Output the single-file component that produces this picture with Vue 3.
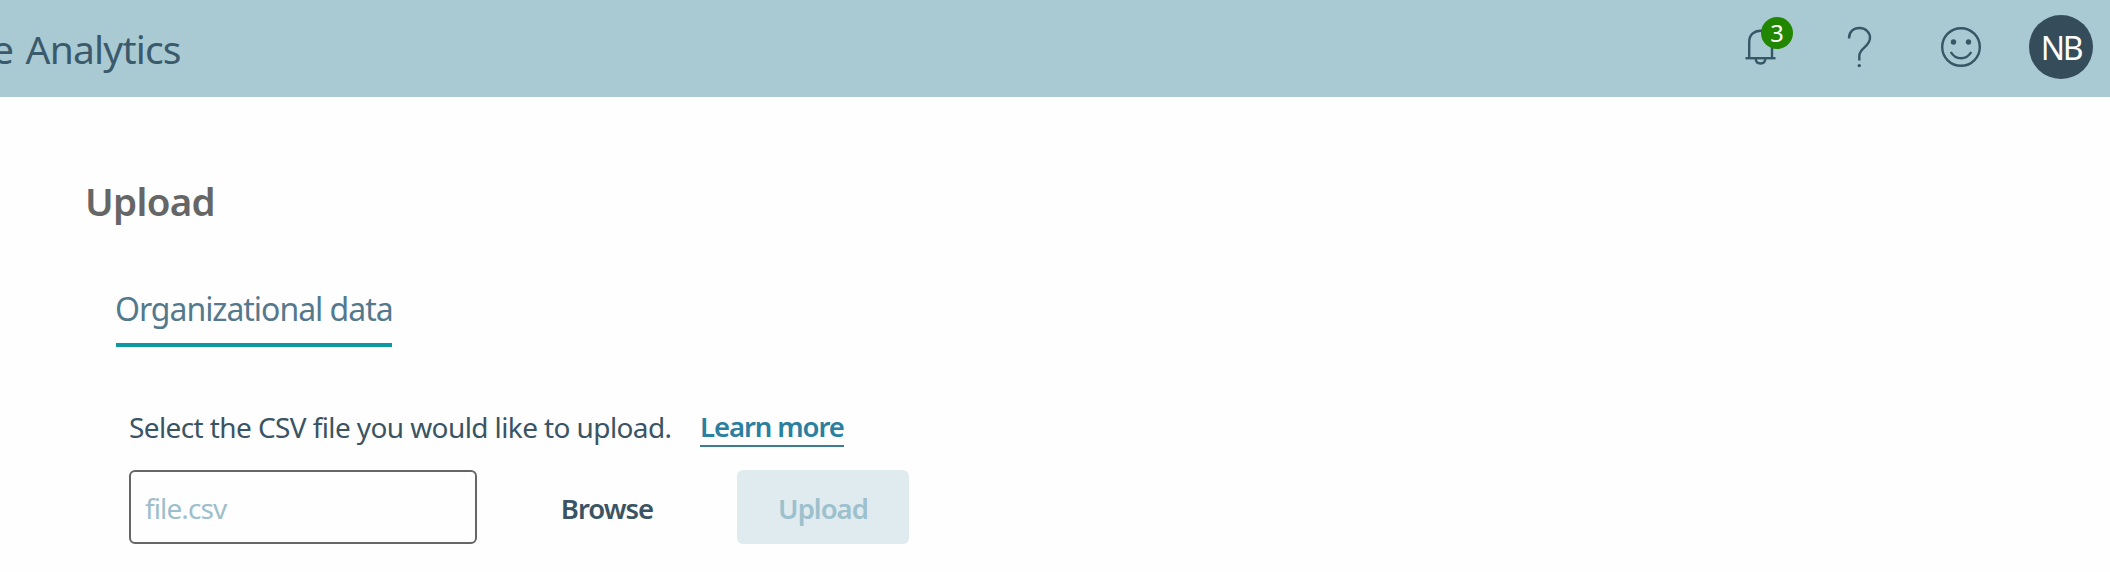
<script setup>
import { ref } from 'vue'

const notifications = ref(3)
const initials = 'NB'
const fileName = ref('')
</script>

<template>
  <div class="page">
    <header class="topbar">
      <div class="brand">e <span class="brand-name">Analytics</span></div>
      <div class="actions">
        <div class="bell">
          <svg width="32" height="38" viewBox="0 0 32 38" fill="none" stroke="#355766" stroke-width="2.400">
            <path d="M4.200 30V14C4.200 7 9 2.700 15.700 2.700S27 7 27 14V30" />
            <path d="M0.500 30.200H30.500" />
            <path d="M10.800 31C10.800 34 12.600 35.500 15.500 35.500S20.200 34 20.200 31" />
          </svg>
          <span class="badge">{{ notifications }}</span>
        </div>
        <svg class="help" width="26" height="44" viewBox="0 0 26 44" fill="none" stroke="#355766" stroke-width="2.400">
          <path d="M2 13.500C2 6.500 6.500 3 12.500 3S23 7.200 23 12.800C23 22 12.300 22.500 12.300 31V35.500" />
          <circle cx="12.300" cy="40.600" r="1.700" fill="#355766" stroke="none" />
        </svg>
        <svg class="smile" width="42" height="42" viewBox="0 0 42 42" fill="none" stroke="#355766" stroke-width="2.400">
          <circle cx="21" cy="21" r="18.800" />
          <circle cx="13.500" cy="16" r="2.700" fill="#355766" stroke="none" />
          <circle cx="28.500" cy="16" r="2.700" fill="#355766" stroke="none" />
          <path d="M10.800 26C13.200 30.300 16.600 32.200 21 32.200S28.800 30.300 31.200 26" />
        </svg>
        <div class="avatar"><span>{{ initials }}</span></div>
      </div>
    </header>

    <main class="content">
      <h1 class="title"><span>Upload</span></h1>
      <nav class="tabs">
        <a class="tab"><span>Organizational data</span></a>
      </nav>
      <section class="panel">
        <p class="hint">
          <span class="hint-text">Select the CSV file you would like to upload.</span>
          <a class="learn"><span>Learn more</span></a>
        </p>
        <div class="row">
          <input v-model="fileName" class="file" type="text" placeholder="file.csv" />
          <button class="btn browse"><span>Browse</span></button>
          <button class="btn upload" disabled><span>Upload</span></button>
        </div>
      </section>
    </main>
  </div>
</template>

<style>
body {
  margin: 0;
  background: #fefefe;
}
</style>

<style scoped>
.page {
  width: 2110px;
  height: 572px;
  overflow: hidden;
  background: #fefefe;
  font-family: "Noto Sans", "Open Sans", sans-serif;
  font-variant-ligatures: none;
  color: #3a5463;
}
.topbar {
  display: flex;
  justify-content: space-between;
  height: 97px;
  box-sizing: border-box;
  background: #a9c9d3;
}
.brand {
  margin: 22px 0 0 -8px;
  font-size: 39px;
  line-height: 54px;
  letter-spacing: -0.800px;
  word-spacing: 3px;
  color: #3a5a6b;
  white-space: pre;
}
.actions {
  display: flex;
  align-items: flex-start;
  padding-right: 17px;
}
.bell {
  position: relative;
  width: 32px;
  height: 38px;
  margin: 28px 70px 0 0;
}
.bell svg,
.help,
.smile {
  display: block;
}
.badge {
  position: absolute;
  left: 16px;
  top: -11px;
  width: 32px;
  height: 32px;
  border-radius: 50%;
  background: #218600;
  color: #fff;
  font-size: 23.500px;
  line-height: 32px;
  text-align: center;
}
.help {
  margin: 25px 67px 0 0;
}
.smile {
  margin: 26px 47px 0 0;
}
.avatar {
  width: 64px;
  height: 64px;
  margin-top: 15px;
  border-radius: 50%;
  background: #354c5a;
  color: #fff;
  font-size: 32px;
  line-height: 65px;
  letter-spacing: -2.400px;
  text-align: center;
}
.content {
  padding: 78px 0 0 86px;
}
.title {
  margin: 0;
  font-size: 38.500px;
  font-weight: 600;
  line-height: 52px;
  letter-spacing: -0.700px;
  text-indent: -1px;
  color: #666;
}
.tabs {
  display: flex;
  margin: 60px 0 0 30px;
}
.tab {
  width: 276px;
  height: 56px;
  border-bottom: 4px solid #0d99a1;
  font-size: 32px;
  line-height: 44px;
  letter-spacing: -1.030px;
  text-indent: -1px;
  color: #55798c;
  white-space: nowrap;
}
.panel {
  padding: 61px 0 0 43px;
}
.hint {
  display: flex;
  margin: 0;
  height: 62px;
  font-size: 28px;
  line-height: 38px;
  white-space: nowrap;
}
.hint-text {
  width: 571px;
  letter-spacing: -0.600px;
}
.learn {
  width: 144px;
  height: 37px;
  border-bottom: 2px solid #3a7c98;
  color: #2b7f9f;
  font-size: 27.500px;
  font-weight: 600;
  letter-spacing: -1.100px;
}
.row {
  display: flex;
}
.file {
  width: 348px;
  height: 74px;
  box-sizing: border-box;
  padding: 2px 14px 0;
  border: 2px solid #666;
  border-radius: 6px;
  background: #fefefe;
  font: 28px "Noto Sans", "Open Sans", sans-serif;
  letter-spacing: -0.900px;
  color: #3a5463;
}
.file::placeholder {
  color: #9dbfcd;
  opacity: 1;
}
.btn {
  height: 74px;
  padding: 2px 0 0;
  border: 0;
  border-radius: 6px;
  font: 600 27.500px "Noto Sans", "Open Sans", sans-serif;
  letter-spacing: -1px;
}
.browse {
  width: 172px;
  margin: 0 44px;
  background: transparent;
  color: #3a5463;
}
.upload {
  width: 172px;
  background: #e0ebf0;
  color: #9dc0cd;
}
</style>
